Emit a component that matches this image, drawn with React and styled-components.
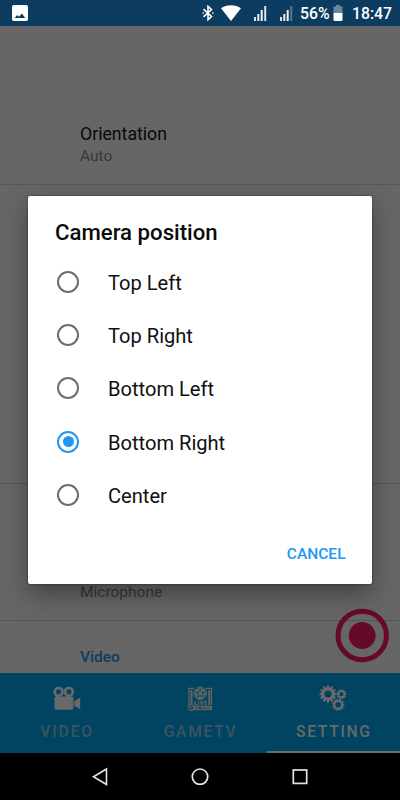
import styled, { createGlobalStyle } from "styled-components";

const GlobalStyle = createGlobalStyle`
  * {
    box-sizing: border-box;
  }

  body {
    margin: 0;
    background: #000;
    font-family: Roboto, "Noto Sans", sans-serif;
  }

  svg {
    display: block;
    flex: none;
  }
`;

const Screen = styled.div`
  position: relative;
  display: flex;
  flex-direction: column;
  width: 400px;
  height: 800px;
  overflow: hidden;
`;

const StatusBar = styled.header`
  display: flex;
  align-items: center;
  justify-content: space-between;
  height: 26px;
  flex: none;
  padding: 0 8px 0 12px;
  background: #0d3c61;
  color: #fff;
`;

const StatusGroup = styled.div`
  display: flex;
  align-items: center;
`;

const StatusText = styled.span`
  padding-top: 2px;
  font-size: 15.8px;
  font-weight: 500;
  line-height: 20px;
  width: ${(p) => p.$width}px;
  margin-right: ${(p) => p.$gap || 0}px;
  white-space: nowrap;
`;

const Gap = styled.span`
  width: ${(p) => p.$size}px;
`;

const Settings = styled.main`
  height: 647px;
  flex: none;
  overflow: hidden;
  background: #666;
`;

const Section = styled.section`
  display: flex;
  flex-direction: column;
  justify-content: flex-end;
  height: ${(p) => p.$height}px;
  padding: 0 0 ${(p) => p.$bottom || 0}px 80px;
  border-bottom: 1px solid #565656;
`;

const SettingName = styled.div`
  font-size: 17.7px;
  line-height: 22px;
  color: #080808;
`;

const SettingValue = styled.div`
  font-size: 15.5px;
  line-height: 22px;
  color: #383838;
`;

const Category = styled.div`
  padding: 26px 0 0 80px;
  font-size: 15.5px;
  font-weight: 500;
  line-height: 20px;
  color: #0d3c61;
`;

const RecordButton = styled.button`
  position: absolute;
  left: 335px;
  top: 608px;
  padding: 0;
  border: none;
  background: transparent;
`;

const TabBar = styled.nav`
  display: flex;
  height: 80px;
  flex: none;
  background: #014462;
`;

const Tab = styled.div`
  display: flex;
  flex-direction: column;
  align-items: center;
  flex: 1;
  padding-top: 11px;
  border-bottom: 2px solid ${(p) => (p.$active ? "#6b6b6b" : "transparent")};
  color: ${(p) => (p.$active ? "#696969" : "#3a5460")};
`;

const TabLabel = styled.span`
  margin-top: 9px;
  padding-left: 1px;
  font-size: 15.6px;
  font-weight: 500;
  letter-spacing: ${(p) => p.$spacing || 1.7}px;
  line-height: 22px;
`;

const NavBar = styled.footer`
  display: flex;
  justify-content: center;
  align-items: center;
  gap: 76px;
  height: 47px;
  flex: none;
  background: #000;
`;

const Dialog = styled.div`
  position: absolute;
  left: 28px;
  top: 196px;
  display: flex;
  flex-direction: column;
  width: 344px;
  height: 388px;
  border-radius: 2px;
  background: #fff;
  box-shadow: 0 0 2px rgba(0, 0, 0, 0.6), 0 10px 24px rgba(0, 0, 0, 0.36);
`;

const DialogTitle = styled.h2`
  margin: 0;
  padding: 22px 27px 0;
  height: 59px;
  flex: none;
  font-size: 22.2px;
  font-weight: 500;
  line-height: 28px;
  color: #0b0b0b;
`;

const Option = styled.label`
  display: flex;
  align-items: center;
  gap: 29px;
  height: 53.3px;
  padding-left: 29px;
  font-size: 20.1px;
  color: #101010;
`;

const OptionText = styled.span`
  padding-top: 2px;
`;

const Radio = styled.span`
  display: flex;
  align-items: center;
  justify-content: center;
  width: 22px;
  height: 22px;
  border: 2px solid ${(p) => (p.$checked ? "#2196f3" : "#6d6d6d")};
  border-radius: 50%;

  &:after {
    content: "";
    width: 11px;
    height: 11px;
    border-radius: 50%;
    background: ${(p) => (p.$checked ? "#2196f3" : "transparent")};
  }
`;

const DialogActions = styled.div`
  display: flex;
  justify-content: flex-end;
  padding: 23px 26.5px 0 0;
`;

const CancelButton = styled.button`
  padding: 0;
  border: none;
  background: transparent;
  font-family: inherit;
  font-size: 15.5px;
  font-weight: 500;
  line-height: 20px;
  color: #2196f3;
`;

const options = [
  "Top Left",
  "Top Right",
  "Bottom Left",
  "Bottom Right",
  "Center",
];

const gearPath = (cx, cy, outer, inner, teeth) => {
  const step = (Math.PI * 2) / teeth;
  const points = [];
  for (let i = 0; i < teeth; i++) {
    [
      [-0.32, inner],
      [-0.23, outer],
      [0.23, outer],
      [0.32, inner],
    ].forEach(([offset, r]) => {
      const a = (i + offset) * step;
      points.push(`${cx + r * Math.cos(a)} ${cy + r * Math.sin(a)}`);
    });
  }
  return `M${points.join("L")}Z`;
};

const Gear = ({ cx, cy, outer, inner, hole, teeth }) => (
  <path
    fillRule="evenodd"
    d={`${gearPath(cx, cy, outer, inner, teeth)}M${cx - hole} ${cy}a${hole} ${hole} 0 1 0 ${hole * 2} 0a${hole} ${hole} 0 1 0 ${-hole * 2} 0Z`}
  />
);

const PhotoIcon = () => (
  <svg width="16" height="16" viewBox="0 0 16 16">
    <rect width="16" height="16" rx="1.8" fill="#fff" />
    <path d="M2.7 13 5.2 10l1.8 1.8L9.8 8.5l3.5 4.5z" fill="#0d3c61" />
  </svg>
);

const BluetoothIcon = () => (
  <svg width="12" height="16" viewBox="0 0 12 16" fill="none" stroke="#fff">
    <path d="M1.5 4.2 9.5 11.5 6 14.7V1.3l3.5 3.2-8 7.3" strokeWidth="1.6" />
    <path d="M1.2 7.2v1.6M10.8 7.2v1.6" strokeWidth="1.3" />
  </svg>
);

const WifiIcon = () => (
  <svg width="20" height="16" viewBox="0 0 20 16" fill="#fff">
    <path d="M0 3.3C5.5-.9 14.5-.9 20 3.3L10 16z" />
  </svg>
);

const SignalIcon = ({ weak }) => (
  <svg width="13" height="15" viewBox="0 0 13 15" fill="#fff">
    <rect x="0" y="11" width="2" height="4" opacity=".85" />
    <rect x="3.3" y="8" width="2" height="7" opacity=".9" />
    <rect x="6.7" y="4" width="2" height="11" opacity=".95" />
    <rect x="10.2" width="2" height="15" opacity={weak ? 0.3 : 0.85} />
  </svg>
);

const BatteryIcon = () => (
  <svg width="10" height="16" viewBox="0 0 10 16">
    <path d="M3 0h4v1.6h2.5V8h-9V1.6H3z" fill="#6b87a0" />
    <path d="M.5 8h9v6.7q0 1.3-1.3 1.3H1.8Q.5 16 .5 14.7z" fill="#fff" />
  </svg>
);

const CameraIcon = () => (
  <svg width="28" height="28" viewBox="0 0 28 28" fill="#696969">
    <g fill="none" stroke="#696969" strokeWidth="2.7">
      <circle cx="5.6" cy="7.8" r="3.9" />
      <circle cx="15.9" cy="7.8" r="3.9" />
    </g>
    <rect x="1.5" y="12.4" width="19" height="13.4" rx="1.7" />
    <path d="M21.3 17.2 27.2 13.4v11.5L21.3 21.7z" />
  </svg>
);

const LiveIcon = () => (
  <svg width="28" height="28" viewBox="0 0 28 28" fill="none" stroke="#606461">
    <path d="M3 21V4.3h5M20 4.3h5.5V21" strokeWidth="1.2" />
    <path d="M5.5 6v15M23.3 6v15" strokeWidth="2" />
    <circle cx="14.2" cy="9.4" r="6.3" fill="#606461" />
    <path
      d="m14.2 6.7 2.8 2-1 3.3h-3.6l-1-3.3zM14.2 6.7V4M17 8.7l3-1M16 12l2 2.5M12.4 12l-2 2.5M11.4 8.7l-3-1M10 5l2-1M16.5 4l2 1M8.5 12h1.8M18.2 12H20"
      stroke="#014462"
      strokeWidth=".9"
    />
    <path
      d="M9 17v3.7h2M12.6 17v4M14.5 17l1.2 4 1.2-4M21 17.3h-2v3.4h2M19 19h1.7"
      strokeWidth="1.1"
    />
    <path d="M7 22.3h18.5v3.4H7z" fill="#606461" />
    <path d="M9 24.1h15" stroke="#014462" strokeWidth=".7" />
    <circle cx="5" cy="23.6" r="2.8" fill="#014462" strokeWidth="1.2" />
    <path d="m4.3 22.3 2 1.3-2 1.3z" fill="#606461" stroke="none" />
    <circle cx="14" cy="24" r="1" fill="#014462" stroke="none" />
  </svg>
);

const GearsIcon = () => (
  <svg width="28" height="28" viewBox="0 0 28 28" fill="#696969">
    <Gear cx={9} cy={10} outer={8.6} inner={6.8} hole={3.5} teeth={12} />
    <Gear cx={22.4} cy={10.2} outer={5.1} inner={4} hole={2.1} teeth={10} />
    <Gear cx={19.2} cy={20.7} outer={6.3} inner={5} hole={2.8} teeth={11} />
  </svg>
);

const App = () => {
  return (
    <Screen>
      <GlobalStyle />
      <StatusBar>
        <PhotoIcon />
        <StatusGroup>
          <BluetoothIcon />
          <Gap $size={7} />
          <WifiIcon />
          <Gap $size={13} />
          <SignalIcon />
          <Gap $size={13} />
          <SignalIcon weak />
          <Gap $size={7} />
          <StatusText $width={29} $gap={4}>
            56%
          </StatusText>
          <BatteryIcon />
          <Gap $size={9} />
          <StatusText $width={40}>18:47</StatusText>
        </StatusGroup>
      </StatusBar>
      <Settings>
        <Section $height={159} $bottom={17}>
          <SettingName>Orientation</SettingName>
          <SettingValue>Auto</SettingValue>
        </Section>
        <Section $height={299} />
        <Section $height={137} $bottom={17}>
          <SettingValue>Microphone</SettingValue>
        </Section>
        <Category>Video</Category>
      </Settings>
      <TabBar>
        <Tab>
          <CameraIcon />
          <TabLabel $spacing={1.9}>VIDEO</TabLabel>
        </Tab>
        <Tab>
          <LiveIcon />
          <TabLabel>GAMETV</TabLabel>
        </Tab>
        <Tab $active>
          <GearsIcon />
          <TabLabel>SETTING</TabLabel>
        </Tab>
      </TabBar>
      <NavBar>
        <svg width="24" height="24" fill="none" stroke="#e4e4e4">
          <path d="M18.5 4v15.5L5.5 11.8z" strokeWidth="1.6" />
        </svg>
        <svg width="24" height="24" fill="none" stroke="#e4e4e4">
          <circle cx="12" cy="11.7" r="7.7" strokeWidth="1.7" />
        </svg>
        <svg width="24" height="24" fill="none" stroke="#e4e4e4">
          <rect x="5.3" y="5" width="13.4" height="13.4" strokeWidth="1.7" />
        </svg>
      </NavBar>
      <RecordButton aria-label="Record">
        <svg width="54" height="55" viewBox="0 0 54 55">
          <circle
            cx="27.2"
            cy="27.5"
            r="24.2"
            fill="none"
            stroke="#650a2b"
            strokeWidth="5"
          />
          <circle cx="27.2" cy="27.5" r="13.4" fill="#650a2b" />
        </svg>
      </RecordButton>
      <Dialog role="dialog">
        <DialogTitle>Camera position</DialogTitle>
        {options.map((name) => (
          <Option key={name}>
            <Radio $checked={name === "Bottom Right"} />
            <OptionText>{name}</OptionText>
          </Option>
        ))}
        <DialogActions>
          <CancelButton>CANCEL</CancelButton>
        </DialogActions>
      </Dialog>
    </Screen>
  );
};

export default App;
